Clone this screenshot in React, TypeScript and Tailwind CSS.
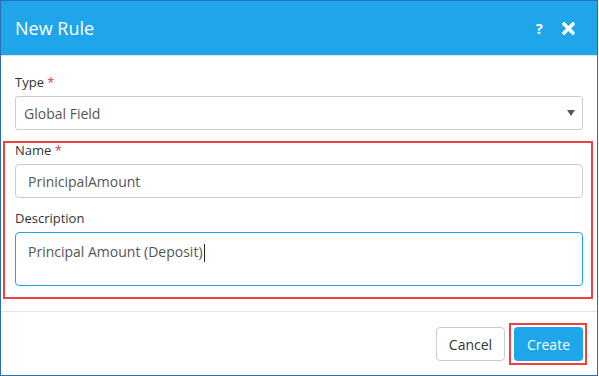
import React from "react";

export default function App() {
  return (
    <div
      className="w-[598px] h-[376px] bg-white border border-[#2b6cb3] flex flex-col overflow-hidden"
      style={{ fontFamily: '"Open Sans", "Noto Sans", sans-serif' }}
    >
      <div className="h-[55px] shrink-0 bg-[#1ea5ea] flex items-center justify-between pl-[14px] pr-[22px] border-b border-[#dedede]">
        <div className="text-white text-[18px] leading-none">New Rule</div>
        <div className="flex items-center gap-[19px] text-white">
          <span className="font-bold text-[15px] leading-none">?</span>
          <svg width="13" height="13" viewBox="0 0 13 13">
            <path d="M2 2 L11 11 M11 2 L2 11" stroke="white" strokeWidth="3.6" strokeLinecap="round" />
          </svg>
        </div>
      </div>
      <div className="flex-1 flex flex-col px-[14px] pt-[17px]">
        <label className="text-[13px] leading-[18px] text-[#333]">
          Type <span className="text-[#e03a3a]">*</span>
        </label>
        <div className="mt-[5px] h-[34px] border border-[#cccccc] rounded-[3px] flex items-center justify-between pl-[8px] pr-[7px]">
          <span className="text-[14px] text-[#555]">Global Field</span>
          <svg width="8" height="6" viewBox="0 0 8 6">
            <path d="M0 0 H8 L4 6 Z" fill="#555" />
          </svg>
        </div>
        <div className="relative mt-[11px] flex flex-col">
          <div className="absolute -left-[12px] -right-[10px] top-0 -bottom-[13px] border-2 border-[#f04040] pointer-events-none" />
          <label className="text-[13px] leading-[18px] text-[#333]">
            Name <span className="text-[#e03a3a]">*</span>
          </label>
          <div className="mt-[5px] h-[34px] border border-[#cccccc] rounded-[4px] flex items-center pl-[12px]">
            <span className="text-[14px] text-[#555]">PrinicipalAmount</span>
          </div>
          <label className="mt-[11px] text-[13px] leading-[18px] text-[#333]">Description</label>
          <div className="mt-[5px] h-[54px] border border-[#1ea5ea] rounded-[4px] pl-[12px] pt-[6px]">
            <span className="text-[14px] leading-[22px] text-[#555]">Principal Amount (Deposit)</span>
            <span className="inline-block w-[1px] h-[18px] bg-[#222] align-middle ml-[1px]" />
          </div>
        </div>
      </div>
      <div className="shrink-0 h-[64px] border-t border-[#e5e5e5] flex items-start justify-end gap-[9px] pt-[15px] pr-[14px]">
        <button className="h-[34px] w-[69px] border border-[#cccccc] rounded-[4px] bg-white text-[14px] text-[#333]">
          Cancel
        </button>
        <div className="relative">
          <div className="absolute -left-[5px] -right-[4px] -top-[4px] -bottom-[4px] border-2 border-[#f04040]" />
          <button className="h-[34px] w-[69px] rounded-[4px] bg-[#1ea5ea] text-[14px] text-white">
            Create
          </button>
        </div>
      </div>
    </div>
  );
}
